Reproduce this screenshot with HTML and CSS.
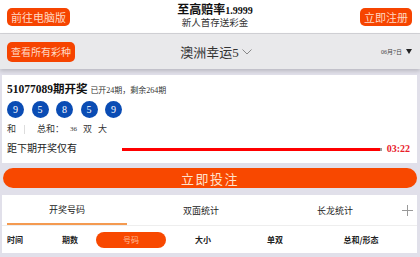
FILE: index.html
```html
<!DOCTYPE html>
<html lang="zh-CN">

<head>
  <meta charset="UTF-8">
  <meta name="viewport" content="width=device-width, initial-scale=1.0">
  <title>澳洲幸运5</title>

  <link rel="stylesheet" href="styles.css">
</head>

<body>
  <header class="topBar">
    <a class="btn">前往电脑版</a>
    <div class="promo">
      <div class="promoTitle">至高赔率<b>1.9999</b></div>
      <div class="promoSub">新人首存送彩金</div>
    </div>
    <a class="btn">立即注册</a>
  </header>

  <div class="gameBar">
    <div><a class="btn btnSmall">查看所有彩种</a></div>
    <div class="gameName">澳洲幸运5
      <svg class="chevron" width="10" height="6" viewBox="0 0 10 6">
        <path d="M0.5 0.5 L5 5 L9.5 0.5" fill="none" stroke="#888" stroke-width="1" />
      </svg>
    </div>
    <div class="gameDate">06月7日 <span class="caret"></span></div>
  </div>

  <div id="page">
    <section class="card">
      <div class="issue"><b>51077089</b><strong>期开奖</strong> <span class="issueInfo">已开24期，剩余264期</span></div>

      <div class="balls">
        <span class="ball">9</span>
        <span class="ball">5</span>
        <span class="ball">8</span>
        <span class="ball">5</span>
        <span class="ball">9</span>
      </div>

      <div class="sumRow">
        <span>和</span>
        <span class="sep"></span>
        <span>总和：</span>
        <span class="sumNum">36</span>
        <span>双</span>
        <span>大</span>
      </div>

      <div class="countdown">
        <span>距下期开奖仅有</span>
        <span class="bar"></span>
        <span class="time">03:22</span>
      </div>
    </section>

    <div class="betWrap">
      <button class="betBtn">立即投注</button>
    </div>

    <nav class="tabs">
      <div class="tab active">开奖号码</div>
      <div class="tab">双面统计</div>
      <div class="tab">长龙统计</div>
      <div class="plus">
        <svg width="11" height="11" viewBox="0 0 11 11">
          <path d="M5.5 0 V11 M0 5.5 H11" stroke="#999" stroke-width="1" />
        </svg>
      </div>
    </nav>

    <div class="cols">
      <div class="col colTime">时间</div>
      <div class="col colIssue">期数</div>
      <div class="col colNum"><span class="pill">号码</span></div>
      <div class="col colSize">大小</div>
      <div class="col colOdd">单双</div>
      <div class="col colSum">总和/形态</div>
    </div>
  </div>
</body>

</html>
```

FILE: styles.css
```css
body {
  margin: 0px;
  background-color: #e1e0ea;
  font-family: "Liberation Serif", "Noto Sans CJK SC", serif;
  color: #222;
}

a {
  text-decoration: none;
}

.btn {
  display: inline-block;
  height: 18px;
  line-height: 18px;
  padding: 0px 4px;
  border-radius: 5px;
  background-color: #f64400;
  color: #ffd9c4;
  font-size: 11px;
  font-family: "Noto Sans CJK SC", sans-serif;
}

.btnSmall {
  height: 20px;
  line-height: 20px;
  font-size: 10px;
  padding: 0px 4px;
}

.topBar {
  display: flex;
  justify-content: space-between;
  align-items: center;
  height: 33px;
  padding: 0px 8px 0px 7px;
  background-color: #fff;
  border-bottom: 1px solid #d4d4d8;
}

.promo {
  text-align: center;
}

.promoTitle {
  font-size: 12px;
  line-height: 13px;
  font-weight: bold;
  color: #111;
}

.promoTitle b {
  font-size: 10px;
}

.promoSub {
  font-size: 9.5px;
  line-height: 13px;
  color: #333;
}

.gameBar {
  display: grid;
  grid-template-columns: 1fr auto 1fr;
  align-items: center;
  height: 35px;
  padding: 0px 8px 0px 7px;
  background-color: #e9e9eb;
  box-shadow: 0px 2px 4px rgba(0, 0, 0, 0.18);
  position: relative;
}

.gameName {
  position: relative;
  font-size: 13px;
  color: #333;
}

.chevron {
  position: absolute;
  left: 100%;
  top: 7px;
  margin-left: 3px;
}

.gameDate {
  justify-self: end;
  font-size: 6px;
  color: #444;
  display: flex;
  align-items: center;
}

.caret {
  display: inline-block;
  margin-left: 4px;
  border-left: 3.5px solid transparent;
  border-right: 3.5px solid transparent;
  border-top: 5px solid #222;
}

#page {
  margin: 6px 3px 0px 2px;
}

.card {
  background-color: #fff;
  padding: 5px 7px 6px 5px;
}

.issue {
  font-size: 11.5px;
  line-height: 16px;
  color: #111;
}

.issue strong {
  font-family: "Noto Sans CJK SC", sans-serif;
}

.issueInfo {
  font-size: 8px;
  color: #333;
}

.balls {
  display: flex;
  gap: 7.5px;
  margin-top: 2px;
}

.ball {
  width: 17px;
  height: 17px;
  border-radius: 50%;
  background-color: #0a4cb4;
  color: #fff;
  font-size: 10px;
  line-height: 17px;
  text-align: center;
}

.sumRow {
  display: flex;
  align-items: center;
  gap: 6px;
  margin-top: 5px;
  font-size: 9px;
  line-height: 12px;
  color: #333;
}

.sep {
  width: 1px;
  height: 9px;
  background-color: #ddd;
  margin: 0px 6px 0px 2px;
}

.sumNum {
  font-size: 7px;
}

.countdown {
  display: flex;
  align-items: center;
  margin-top: 6px;
  font-size: 10px;
  line-height: 16px;
  color: #222;
}

.bar {
  flex: 1;
  height: 3px;
  margin: 0px 5px 0px 45px;
  background-color: #f00;
  border-right: 2px solid #999;
}

.time {
  font-size: 10px;
  font-weight: bold;
  color: #e8202a;
}

.betWrap {
  padding: 5px 0px 7px 1px;
}

.betBtn {
  display: block;
  width: 100%;
  height: 20px;
  border: none;
  border-radius: 10px;
  background-color: #f84800;
  color: #ffe2cc;
  font-size: 13px;
  letter-spacing: 1.5px;
  font-family: "Noto Sans CJK SC", sans-serif;
  padding: 0px;
}

.tabs {
  display: flex;
  height: 30px;
  background-color: #fff;
  border-bottom: 1px solid #eee;
}

.tab {
  width: 134px;
  display: flex;
  align-items: center;
  justify-content: center;
  font-size: 9px;
  color: #222;
  font-family: "Noto Sans CJK SC", sans-serif;
}

.tab.active {
  box-sizing: border-box;
  border-bottom: 2px solid #f49a50;
  margin: 0px 7px 0px 5px;
  width: 120px;
}

.plus {
  flex: 1;
  display: flex;
  align-items: center;
  justify-content: center;
  padding-right: 4px;
}

.cols {
  display: flex;
  height: 27px;
  background-color: #fff;
}

.col {
  display: flex;
  align-items: center;
  justify-content: center;
  font-size: 8px;
  font-weight: bold;
  color: #222;
  font-family: "Noto Sans CJK SC", sans-serif;
}

.colTime {
  width: 42px;
  justify-content: flex-start;
  padding-left: 5px;
  box-sizing: border-box;
}

.colIssue {
  width: 52px;
}

.colNum {
  width: 70px;
}

.colSize {
  width: 74px;
}

.colOdd {
  width: 70px;
}

.colSum {
  width: 102px;
}

.pill {
  width: 70px;
  height: 16px;
  line-height: 16px;
  border-radius: 8px;
  background-color: #f84800;
  color: #ffbd9a;
  text-align: center;
  font-weight: normal;
}
```
